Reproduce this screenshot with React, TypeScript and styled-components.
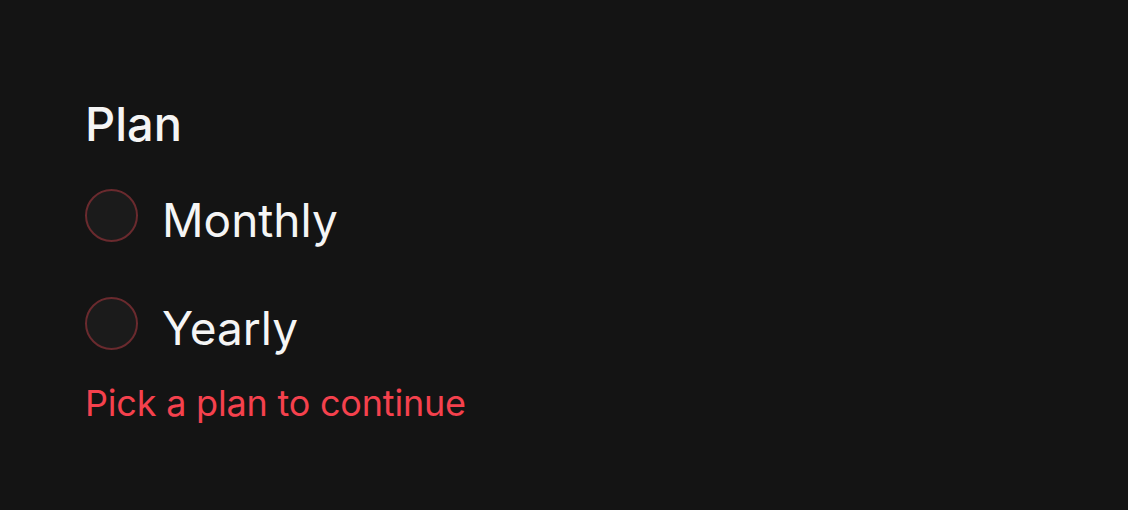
import { FC, useState } from "react";
import styled, { createGlobalStyle } from "styled-components";

const GlobalStyle = createGlobalStyle`
  html, body {
    margin: 0;
    padding: 0;
    background: #141414;
  }
  body {
    font-family: Inter, "Liberation Sans", sans-serif;
    color: #f5f5f5;
  }
`;

const Page = styled.div`
  height: 510px;
  box-sizing: border-box;
  padding: 96px 85px 0;
  overflow: hidden;
`;

const Fieldset = styled.div`
  display: flex;
  flex-direction: column;
`;

const Legend = styled.div`
  font-size: 47px;
  line-height: 55px;
  font-weight: 500;
  margin-bottom: 38px;
`;

const Options = styled.div`
  display: flex;
  flex-direction: column;
  gap: 50px;
`;

const OptionRow = styled.label`
  display: flex;
  align-items: flex-start;
  gap: 24px;
  cursor: pointer;
`;

const Radio = styled.span<{ $checked: boolean }>`
  width: 53px;
  height: 53px;
  box-sizing: border-box;
  border-radius: 50%;
  border: 2px solid #6a2a2e;
  background: #1b1b1b;
  flex-shrink: 0;
  display: flex;
  align-items: center;
  justify-content: center;
  &::after {
    content: "";
    width: 22px;
    height: 22px;
    border-radius: 50%;
    background: #f5f5f5;
    display: ${(p) => (p.$checked ? "block" : "none")};
  }
`;

const OptionText = styled.span`
  font-size: 46px;
  line-height: 53px;
  font-weight: 400;
  padding-top: 5px;
`;

const ErrorText = styled.div`
  margin-top: 27px;
  font-size: 36px;
  line-height: 1.2;
  color: #f5414d;
  letter-spacing: -0.2px;
`;

const plans = ["Monthly", "Yearly"];

const App: FC = () => {
  const [plan, setPlan] = useState<string | null>(null);

  return (
    <>
      <GlobalStyle />
      <Page>
        <Fieldset>
          <Legend>Plan</Legend>
          <Options>
            {plans.map((p) => (
              <OptionRow key={p} onClick={() => setPlan(p)}>
                <Radio $checked={plan === p} />
                <OptionText>{p}</OptionText>
              </OptionRow>
            ))}
          </Options>
          {!plan && <ErrorText>Pick a plan to continue</ErrorText>}
        </Fieldset>
      </Page>
    </>
  );
};

export default App;
